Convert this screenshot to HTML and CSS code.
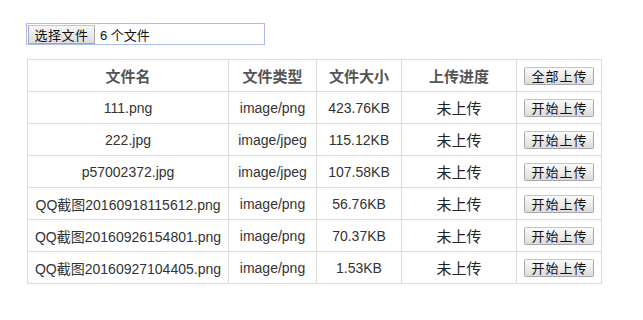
FILE: index.html
```html
<!DOCTYPE html>
<html lang="zh-CN">
<head>
<meta charset="utf-8">
<title>文件上传</title>
<link rel="stylesheet" href="styles.css">
</head>
<body>
<div class="page">
  <div class="file-input">
    <span class="file-btn">选择文件</span>
    <span class="file-text">6 个文件</span>
  </div>
  <table class="files">
    <colgroup>
      <col class="c-name"><col class="c-type"><col class="c-size"><col class="c-prog"><col class="c-act">
    </colgroup>
    <thead>
      <tr><th>文件名</th><th>文件类型</th><th>文件大小</th><th>上传进度</th><th><button class="btn">全部上传</button></th></tr>
    </thead>
    <tbody>
      <tr><td>111.png</td><td>image/png</td><td>423.76KB</td><td class="prog">未上传</td><td><button class="btn">开始上传</button></td></tr>
      <tr><td>222.jpg</td><td>image/jpeg</td><td>115.12KB</td><td class="prog">未上传</td><td><button class="btn">开始上传</button></td></tr>
      <tr><td>p57002372.jpg</td><td>image/jpeg</td><td>107.58KB</td><td class="prog">未上传</td><td><button class="btn">开始上传</button></td></tr>
      <tr><td>QQ截图20160918115612.png</td><td>image/png</td><td>56.76KB</td><td class="prog">未上传</td><td><button class="btn">开始上传</button></td></tr>
      <tr><td>QQ截图20160926154801.png</td><td>image/png</td><td>70.37KB</td><td class="prog">未上传</td><td><button class="btn">开始上传</button></td></tr>
      <tr><td>QQ截图20160927104405.png</td><td>image/png</td><td>1.53KB</td><td class="prog">未上传</td><td><button class="btn">开始上传</button></td></tr>
    </tbody>
  </table>
</div>
</body>
</html>
```

FILE: styles.css
```css
html, body {
  margin: 0;
  padding: 0;
  background: #fff;
}
body {
  font-family: "Liberation Sans", Arial, "Noto Sans CJK SC", sans-serif;
  font-size: 14px;
  color: #333;
}
.page {
  padding: 23px 0 0 26px;
}
.file-input {
  display: flex;
  align-items: center;
  width: 237px;
  height: 20px;
  border: 1px solid #a9bbf0;
  padding: 0;
  box-sizing: content-box;
}
.file-btn {
  display: flex;
  align-items: center;
  justify-content: center;
  width: 67px;
  height: 19px;
  margin: 0 0 0 1px;
  border: 1px solid #a8a8a8;
  border-top-color: #c6c6c6;
  background: linear-gradient(#f6f6f6, #dedede);
  font-size: 13px;
  letter-spacing: 0.5px;
  color: #111;
  box-sizing: border-box;
  border-radius: 1px;
}
.file-text {
  margin-left: 5px;
  font-size: 13px;
  color: #111;
}
.files {
  margin: 14px 0 0 1px;
  border-collapse: collapse;
  table-layout: fixed;
  width: 575px;
  border: 1px solid #dcdcdc;
}
.c-name { width: 201px; }
.c-type { width: 88px; }
.c-size { width: 85px; }
.c-prog { width: 115px; }
.c-act { width: 85px; }
.files th, .files td {
  border: 1px solid #dcdcdc;
  height: 31px;
  padding: 0;
  text-align: center;
  vertical-align: middle;
  white-space: nowrap;
}
.files th {
  font-weight: bold;
  color: #555;
  font-size: 15px;
}
.files td {
  color: #333;
}
.files td.prog {
  color: #222;
  font-size: 15px;
}
.btn {
  font-family: "Noto Sans CJK SC", sans-serif;
  font-size: 13px;
  letter-spacing: 1px;
  color: #111;
  width: 70px;
  height: 18px;
  padding: 0 0 0 1px;
  line-height: 16px;
  border: 1px solid #a7a7a7;
  border-top-color: #c4c4c4;
  border-radius: 2px;
  background: linear-gradient(#fafafa, #dcdcdc);
  vertical-align: middle;
}
```
